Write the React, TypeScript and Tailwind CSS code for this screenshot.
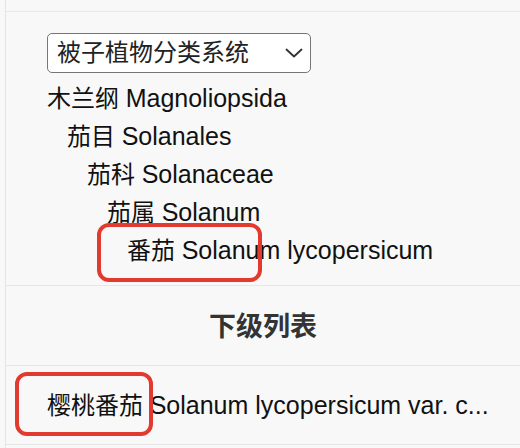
import React from "react";

const FONT = { fontFamily: '"Liberation Sans", "Noto Sans CJK SC", sans-serif' };

export default function App() {
  const tree = [
    { cn: "木兰纲", la: "Magnoliopsida", pl: "pl-0" },
    { cn: "茄目", la: "Solanales", pl: "pl-[20px]" },
    { cn: "茄科", la: "Solanaceae", pl: "pl-[40px]" },
    { cn: "茄属", la: "Solanum", pl: "pl-[60px]" },
    { cn: "番茄", la: "Solanum lycopersicum", pl: "pl-[80px]" },
  ];
  return (
    <div className="relative w-[520px] h-[448px] overflow-hidden bg-[#f8f8f8] text-[#111]" style={FONT}>
      <div className="ml-[5px] h-full border-l border-[#e4e4e4]">
        <div className="h-[12px] border-b border-[#e8e8e8]" />
        <div className="pl-[41px] pt-[21px] pb-[16px] border-b border-[#e6e6e6]">
          <div className="flex items-center justify-between w-[264px] h-[40px] border-[1.5px] border-[#767676] rounded-[5px] bg-white pl-[9px] pr-[7px] text-[24px] leading-none text-[#222]">
            <span>被子植物分类系统</span>
            <svg width="18" height="10" viewBox="0 0 18 10" fill="none" stroke="#333" strokeWidth="1.8" strokeLinecap="round" strokeLinejoin="round">
              <path d="M1.5 1.5 L9 8.5 L16.5 1.5" />
            </svg>
          </div>
          <div className="mt-[6px] flex flex-col">
            {tree.map((t) => (
              <div key={t.la + t.cn} className={`${t.pl} h-[38px] leading-[38px] text-[24px] whitespace-nowrap`}>
                {t.cn} <span className="text-[25px]">{t.la}</span>
              </div>
            ))}
          </div>
        </div>
        <div className="h-[80px] flex items-center justify-center border-b border-[#e6e6e6] text-[27px] font-bold text-[#333] pt-[3px]">
          下级列表
        </div>
        <div className="h-[79px] flex items-center pl-[41px] border-b border-[#e6e6e6]">
          <span className="whitespace-nowrap text-[24px] leading-[38px] pt-[1px]">
            樱桃番茄 <span className="text-[25px]">Solanum lycopersicum var. c...</span>
          </span>
        </div>
      </div>
      <div className="absolute left-[97px] top-[223px] w-[165px] h-[59px] border-[4px] border-[#e23a2e] rounded-[12px]" />
      <div className="absolute left-[15px] top-[372px] w-[138px] h-[64px] border-[4px] border-[#e23a2e] rounded-[12px]" />
    </div>
  );
}
